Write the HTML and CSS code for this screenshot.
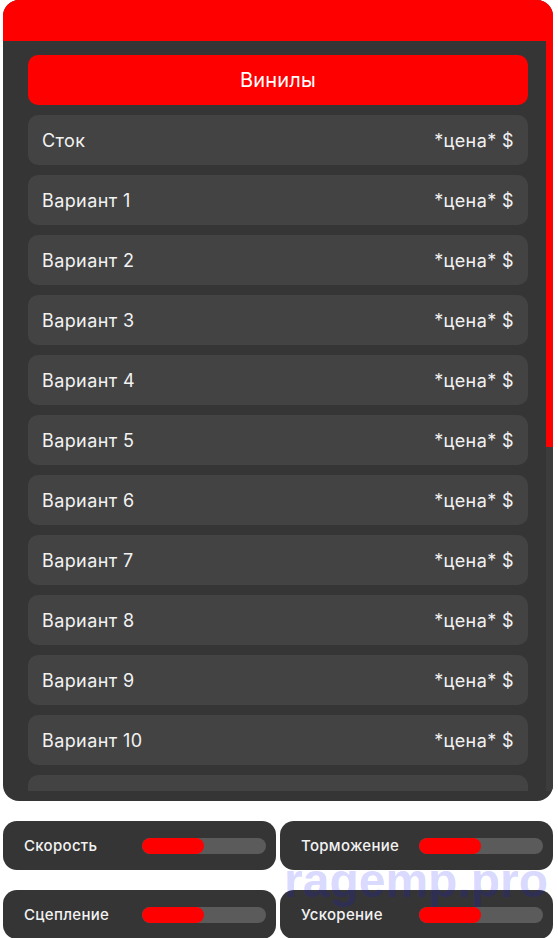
FILE: index.html
```html
<!DOCTYPE html>
<html lang="ru">
<head>
  <meta charset="UTF-8">
  <meta name="viewport" content="width=device-width, initial-scale=1.0">
  <title>Тюнинг — Винилы</title>
  <link rel="stylesheet" href="styles.css">
</head>
<body>
  <div class="tuning">
    <div class="panel">
      <div class="panel-header"></div>
      <div class="list-wrap">
        <div class="list">
          <div class="list-title">Винилы</div>
          <div class="item"><span>Сток</span><span>*цена* $</span></div>
          <div class="item"><span>Вариант 1</span><span>*цена* $</span></div>
          <div class="item"><span>Вариант 2</span><span>*цена* $</span></div>
          <div class="item"><span>Вариант 3</span><span>*цена* $</span></div>
          <div class="item"><span>Вариант 4</span><span>*цена* $</span></div>
          <div class="item"><span>Вариант 5</span><span>*цена* $</span></div>
          <div class="item"><span>Вариант 6</span><span>*цена* $</span></div>
          <div class="item"><span>Вариант 7</span><span>*цена* $</span></div>
          <div class="item"><span>Вариант 8</span><span>*цена* $</span></div>
          <div class="item"><span>Вариант 9</span><span>*цена* $</span></div>
          <div class="item"><span>Вариант 10</span><span>*цена* $</span></div>
          <div class="item"><span>Вариант 11</span><span>*цена* $</span></div>
        </div>
        <!-- scroll indicator -->
        <div class="scroll-track">
          <div class="scroll-thumb" style="height: 406px"></div>
        </div>
      </div>
    </div>

    <div class="stats">
      <div class="stat">
        <span class="stat-name">Скорость</span>
        <div class="bar"><div class="bar-fill" style="width: 50%"></div></div>
      </div>
      <div class="stat">
        <span class="stat-name">Торможение</span>
        <div class="bar"><div class="bar-fill" style="width: 50%"></div></div>
      </div>
      <div class="stat">
        <span class="stat-name">Сцепление</span>
        <div class="bar"><div class="bar-fill" style="width: 50%"></div></div>
      </div>
      <div class="stat">
        <span class="stat-name">Ускорение</span>
        <div class="bar"><div class="bar-fill" style="width: 50%"></div></div>
      </div>
    </div>

    <div class="watermark">ragemp.pro</div>
  </div>
</body>
</html>
```

FILE: styles.css
```css
:root {
  --red: #ff0000;
  --panel: #353535;
  --item: #434343;
  --track: #5b5b5b;
  --text: #f2f2f2;
}

body {
  margin: 0;
  background: #ffffff;
  font-family: 'Inter', 'Open Sans', sans-serif;
  color: var(--text);
}

.tuning {
  position: relative;
  width: 550px;
  padding: 0 5px 0 3px;
}

.panel {
  background: var(--panel);
  border-radius: 16px;
  overflow: hidden;
  padding-bottom: 10px;
}

.panel-header {
  height: 41px;
  background: var(--red);
}

.list-wrap {
  display: flex;
  height: 750px;
}

.list {
  flex: 1;
  overflow: hidden;
  padding: 14px 18px 0 25px;
  display: flex;
  flex-direction: column;
  gap: 10px;
}

.scroll-track {
  width: 7px;
  background: #3c3c3c;
}

.scroll-thumb {
  background: var(--red);
}

.list-title,
.item {
  flex: 0 0 50px;
  border-radius: 10px;
  display: flex;
  align-items: center;
}

.list-title {
  background: var(--red);
  justify-content: center;
  font-size: 20px;
  letter-spacing: 0.2px;
  color: #ffffff;
}

.item {
  background: var(--item);
  justify-content: space-between;
  padding: 0 14px;
  font-size: 18px;
  letter-spacing: 0.4px;
}

.stats {
  margin-top: 20px;
  display: grid;
  grid-template-columns: 273px 273px;
  column-gap: 4px;
  row-gap: 20px;
}

.stat {
  height: 49px;
  background: var(--panel);
  border-radius: 14px;
  display: flex;
  align-items: center;
  justify-content: space-between;
  padding: 0 10px 0 21px;
}

.stat-name {
  font-size: 15px;
  font-weight: 500;
  letter-spacing: 0.3px;
}

.bar {
  width: 124px;
  height: 16px;
  background: var(--track);
  border-radius: 8px;
  overflow: hidden;
}

.bar-fill {
  height: 100%;
  background: var(--red);
  border-radius: 8px;
}

.watermark {
  position: absolute;
  left: 284px;
  top: 853px;
  font-family: 'Liberation Sans', Arial, sans-serif;
  font-weight: 700;
  font-size: 48px;
  color: rgba(20, 20, 255, 0.18);
  pointer-events: none;
}
```
